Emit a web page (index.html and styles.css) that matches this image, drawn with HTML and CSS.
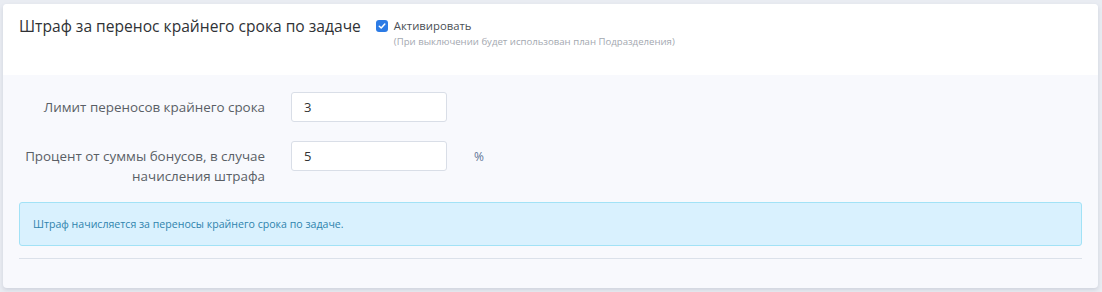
FILE: index.html
```html
<!DOCTYPE html>
<html lang="ru">
<head>
  <meta charset="UTF-8" />
  <title>Штраф за перенос крайнего срока</title>
  <link rel="stylesheet" href="styles.css">
</head>
<body>
  <div class="card">
    <div class="card-header">
      <h3>Штраф за перенос крайнего срока по задаче</h3>
      <div class="switch">
        <label class="check">
          <span class="box">
            <svg width="8" height="8" viewBox="0 0 8 8"><path d="M1.3 4.2 L3.2 6 L6.8 2" fill="none" stroke="#fff" stroke-width="1.5" stroke-linecap="round" stroke-linejoin="round"/></svg>
          </span>
          Активировать
        </label>
        <div class="hint">(При выключении будет использован план Подразделения)</div>
      </div>
    </div>

    <div class="card-body">
      <div class="rows">
        <div class="row">
          <label class="row-label">Лимит переносов крайнего срока</label>
          <input class="field" type="text" value="3">
        </div>
        <div class="row">
          <label class="row-label">Процент от суммы бонусов, в случае начисления штрафа</label>
          <input class="field" type="text" value="5">
          <span class="unit">%</span>
        </div>
      </div>

      <div class="alert">Штраф начисляется за переносы крайнего срока по задаче.</div>
      <hr class="divider">
    </div>
  </div>
</body>
</html>
```

FILE: styles.css
```css
body {
  margin: 0;
  padding: 4px 4px 4px 3px;
  background: #e9ecf2;
  font-family: 'Open Sans', sans-serif;
}

.card {
  background: #f8f9fd;
  border-radius: 4px;
  box-shadow: 0 2px 4px rgba(60, 70, 100, 0.15);
  overflow: hidden;
  height: 284px;
  box-sizing: border-box;
}

.card-header {
  background: #ffffff;
  height: 71px;
  display: flex;
  align-items: flex-start;
  padding: 11px 16px 0 16px;
  box-sizing: border-box;
  gap: 15px;
}

.card-header h3 {
  margin: 0;
  font-size: 15.6px;
  font-weight: 400;
  color: #2f3236;
  line-height: 22px;
}

.switch {
  padding-top: 3px;
}

.check {
  display: flex;
  align-items: center;
  gap: 6px;
  font-size: 11.3px;
  color: #4a4f55;
  line-height: 16px;
}

.box {
  width: 12px;
  height: 12px;
  border-radius: 3px;
  background: #2c7be5;
  display: flex;
  align-items: center;
  justify-content: center;
}

.hint {
  margin-left: 18px;
  margin-top: 1px;
  font-size: 9.6px;
  color: #a3a8b0;
}

.card-body {
  padding: 17px 16px 0 16px;
}

.rows {
  display: flex;
  flex-direction: column;
  gap: 19px;
}

.row {
  display: flex;
  align-items: flex-start;
}

.row-label {
  width: 246px;
  text-align: right;
  font-size: 13.4px;
  font-weight: 500;
  color: #5a5f66;
  line-height: 20px;
  padding-top: 5px;
}

.field {
  margin-left: 26px;
  width: 156px;
  height: 30px;
  box-sizing: border-box;
  border: 1px solid #d9dee7;
  border-radius: 3px;
  background: #ffffff;
  padding: 0 12px;
  font-family: 'Open Sans', sans-serif;
  font-size: 13px;
  color: #333;
}

.unit {
  margin-left: 27px;
  padding-top: 7px;
  font-size: 12px;
  color: #5f7596;
}

.alert {
  margin-top: 16px;
  background: #d9f1fe;
  border: 1px solid #a2e2f6;
  border-radius: 3px;
  height: 44px;
  box-sizing: border-box;
  padding: 0 13px;
  display: flex;
  align-items: center;
  font-size: 10.6px;
  color: #2f83ad;
}

.divider {
  margin: 12px 0 0 0;
  border: none;
  border-top: 1px solid #dbe1ea;
}
```
